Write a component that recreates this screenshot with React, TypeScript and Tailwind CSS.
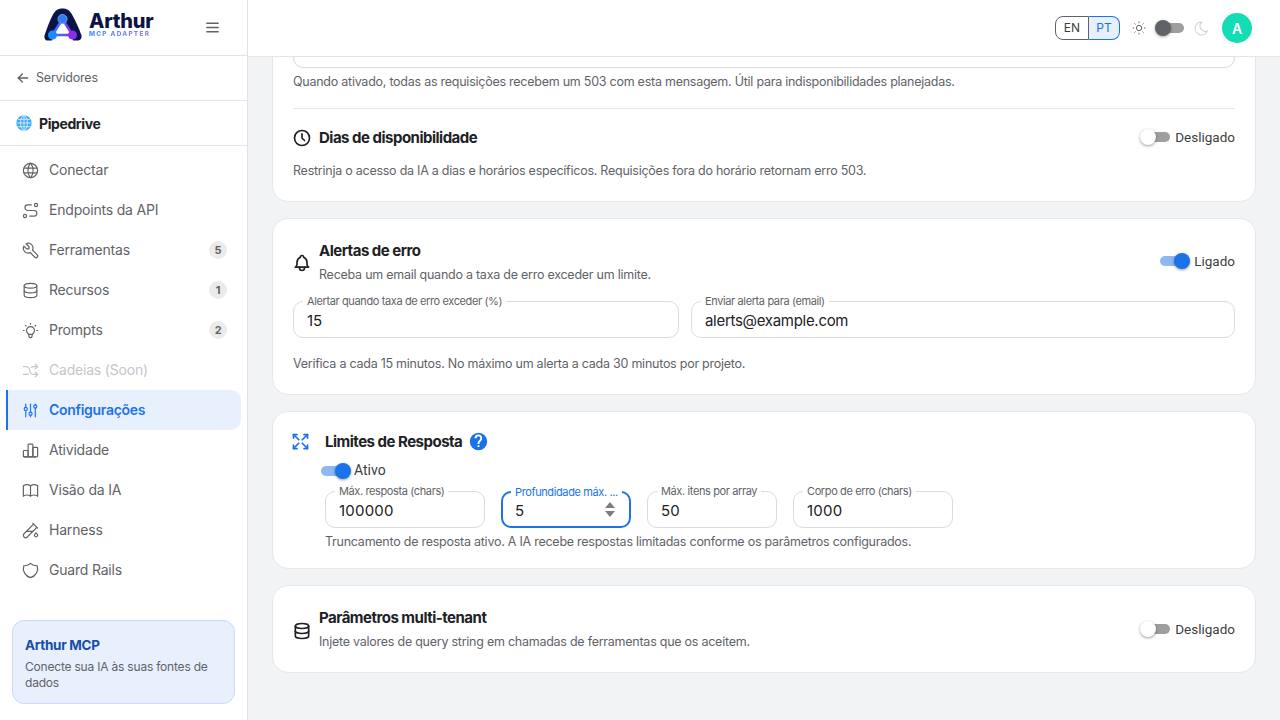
import React from "react";
import {
  TbAdjustments,
  TbArrowLeft,
  TbArrowsMaximize,
  TbArrowsShuffle,
  TbBell,
  TbBook,
  TbBulb,
  TbChartBar,
  TbClock,
  TbDatabase,
  TbMenu2,
  TbMoon,
  TbRoute,
  TbShield,
  TbSun,
  TbTestPipe,
  TbTool,
  TbWorld,
} from "react-icons/tb";

const navItems = [
  { label: "Conectar", icon: TbWorld },
  { label: "Endpoints da API", icon: TbRoute },
  { label: "Ferramentas", icon: TbTool, badge: "5" },
  { label: "Recursos", icon: TbDatabase, badge: "1" },
  { label: "Prompts", icon: TbBulb, badge: "2" },
  { label: "Cadeias (Soon)", icon: TbArrowsShuffle, disabled: true },
  { label: "Configurações", icon: TbAdjustments, active: true },
  { label: "Atividade", icon: TbChartBar },
  { label: "Visão da IA", icon: TbBook },
  { label: "Harness", icon: TbTestPipe },
  { label: "Guard Rails", icon: TbShield },
];

const Logo = () => (
  <svg width="38" height="33" viewBox="0 0 38 33" fill="none">
    <defs>
      <linearGradient id="tri" x1="6" y1="0" x2="30" y2="0" gradientUnits="userSpaceOnUse">
        <stop offset="0" stopColor="#1a8cff" />
        <stop offset="1" stopColor="#8a2cf0" />
      </linearGradient>
    </defs>
    <path
      d="M0.500 27.500C3 20 6 12 9 6.500C11.500 2 14.500 0.500 18.500 0.500C22.500 0.500 25.500 2 28 6.500C31 12 35 20 37.500 27.500C38 31 36 32.500 33.500 32.500H3.500C1.500 32.500 0 31 0.500 27.500Z"
      fill="#0c1445"
    />
    <path d="M8 33H29L28 27H9Z" fill="#ffffff" />
    <path d="M18.500 11L8.500 27H28.500Z" fill="#ffffff" stroke="url(#tri)" strokeWidth="2.500" strokeLinejoin="round" />
    <circle cx="18.500" cy="11" r="4.500" fill="#2f7bf5" stroke="#6aa5fa" strokeWidth="1" />
    <circle cx="8.500" cy="27" r="4.500" fill="#1a8cff" />
    <circle cx="28.500" cy="27" r="4.500" fill="#8a2cf0" />
  </svg>
);

const GlobeEmoji = () => (
  <svg width="16" height="16" viewBox="0 0 16 16" fill="none">
    <circle cx="8" cy="8" r="7.700" fill="#3fa9f5" />
    <g stroke="#d6effd" strokeWidth="0.900">
      <ellipse cx="8" cy="8" rx="3.400" ry="7.400" />
      <path d="M8 0.500V15.500M0.600 8H15.400M1.600 4.300H14.400M1.600 11.700H14.400" />
    </g>
  </svg>
);

const Toggle = ({ on }: { on?: boolean }) => (
  <span className="relative flex h-4 w-[30px] shrink-0 items-center">
    <span className={`h-[10px] w-[24px] rounded-full ${on ? "ml-0 bg-[#8db8f4]" : "ml-[6px] bg-[#9e9e9e]"}`} />
    <span
      className={`absolute top-0 h-4 w-4 rounded-full shadow-[0_1px_3px_rgba(0,0,0,0.4)] ${
        on ? "right-0 bg-[#1a73e8]" : "left-0 bg-white"
      }`}
    />
  </span>
);

const Field = ({
  label,
  value,
  className,
  focused,
}: {
  label: string;
  value: string;
  className: string;
  focused?: boolean;
}) => (
  <div
    className={`relative flex h-[37px] items-center rounded-[10px] bg-white text-[15px] text-[#202124] ${
      focused ? "border-2 border-[#1a73e8] pl-[12px]" : "border border-[#dadce0] pl-[13px]"
    } ${className}`}
  >
    <span
      className={`absolute -top-[8px] whitespace-nowrap bg-white px-[4px] text-[11px] leading-[14px] tracking-[-0.38px] ${
        focused ? "left-[8px] text-[#1a73e8]" : "left-[9px] text-[#5f6368]"
      }`}
    >
      {label}
    </span>
    <span className="mt-1">{value}</span>
    {focused && (
      <span className="ml-auto mr-[14px] flex flex-col gap-[3px]">
        <span className="h-0 w-0 border-x-[5px] border-b-[6px] border-x-transparent border-b-[#7a7d82]" />
        <span className="h-0 w-0 border-x-[5px] border-t-[6px] border-x-transparent border-t-[#7a7d82]" />
      </span>
    )}
  </div>
);

const Sidebar = () => (
  <aside className="flex h-full w-[248px] shrink-0 flex-col border-r border-[#e0e2e6] bg-white">
    <div className="flex h-14 shrink-0 items-center border-b border-[#e4e5e8] pb-[7px] pl-[44px]">
      <Logo />
      <div className="ml-[7px] flex flex-col">
        <span className="text-[20px] font-extrabold leading-[18px] tracking-[-0.2px] text-[#0c1445]">Arthur</span>
        <span className="mt-[1px] bg-gradient-to-r from-[#2f8ff5] to-[#9a7cf5] bg-clip-text text-[6.500px] font-extrabold leading-[6px] tracking-[1.200px] text-transparent">
          MCP ADAPTER
        </span>
      </div>
      <TbMenu2 className="ml-auto mr-[26px] mt-[7px] text-[#5f6368]" size={17} />
    </div>
    <div className="flex h-[45px] shrink-0 items-center gap-[5px] border-b border-[#e4e5e8] pl-[15px] text-[12.500px] tracking-[-0.2px] text-[#5f6368]">
      <TbArrowLeft size={16} />
      <span>Servidores</span>
    </div>
    <div className="flex h-[45px] shrink-0 items-center gap-[7px] border-b border-[#e4e5e8] pl-[16px] text-[14px] font-bold tracking-[-0.4px] text-[#202124]">
      <GlobeEmoji />
      Pipedrive
    </div>
    <nav className="mt-[4px] flex flex-col pl-[6px] pr-[6px]">
      {navItems.map((item) => {
        const Icon = item.icon;
        return (
          <div
            key={item.label}
            className={`flex h-10 items-center gap-[9px] rounded-r-[10px] text-[14px] ${
              item.active
                ? "border-l-2 border-[#1a73e8] bg-[#e8f0fe] pl-[13px] font-semibold tracking-[-0.3px] text-[#1a73e8]"
                : item.disabled
                  ? "pl-[15px] tracking-[-0.2px] text-[#c4c6ca]"
                  : "pl-[15px] tracking-[-0.2px] text-[#5f6368]"
            }`}
          >
            <Icon size={19} strokeWidth={1.5} className="shrink-0" />
            <span className="mb-[2px]">{item.label}</span>
            {item.badge && (
              <span className="ml-auto mr-[14px] flex h-[18px] w-[18px] items-center justify-center rounded-full bg-[#ebebeb] text-[11px] font-bold text-[#5f6368]">
                {item.badge}
              </span>
            )}
          </div>
        );
      })}
    </nav>
    <div className="mx-3 mb-4 mt-auto h-[84px] rounded-xl border border-[#c9dafb] bg-[#e8f0fe] px-3 pt-[15px]">
      <div className="text-[13.500px] font-bold leading-[18px] tracking-[-0.3px] text-[#174ea6]">Arthur MCP</div>
      <div className="mt-[5px] text-[12px] leading-4 tracking-[-0.2px] text-[#5f6368]">Conecte sua IA às suas fontes de dados</div>
    </div>
  </aside>
);

const Header = () => (
  <header className="z-10 flex h-[57px] shrink-0 items-center justify-end border-b border-[#e4e5e8] bg-white pr-[28px]">
    <div className="flex h-6 text-[12px]">
      <span className="flex w-[34px] items-center justify-center rounded-l-[8px] border border-[#5f6368] text-[#3c4043]">EN</span>
      <span className="flex w-[31px] items-center justify-center rounded-r-[8px] border border-l-0 border-[#1a73e8] bg-[#e8f0fe] text-[#1a73e8]">PT</span>
    </div>
    <TbSun size={16} strokeWidth={1.5} className="ml-[11px] text-[#5f6368]" />
    <span className="relative ml-[8px] flex h-5 w-[29px] items-center">
      <span className="ml-[2px] h-[10px] w-[27px] rounded-full bg-[#9e9e9e]" />
      <span className="absolute left-0 top-[2px] h-4 w-4 rounded-full bg-[#5f6368] shadow-[0_1px_3px_rgba(0,0,0,0.35)]" />
    </span>
    <TbMoon size={17} strokeWidth={1.5} className="ml-[9px] text-[#cfd1d4]" />
    <span className="ml-[12px] flex h-[30px] w-[30px] items-center justify-center rounded-full bg-[#14dcb4] text-[14px] font-semibold text-white">A</span>
  </header>
);

const Card = ({ className, children }: { className: string; children: React.ReactNode }) => (
  <section className={`rounded-2xl border border-[#e6e7ea] bg-white ${className}`}>{children}</section>
);

const hint = "text-[12.500px] leading-[16px] tracking-[-0.25px] text-[#5f6368]";
const title = "text-[15px] font-bold leading-[20px] tracking-[-0.5px]";
const stateLabel = "ml-auto flex items-center font-['Roboto',sans-serif] text-[13.500px] text-[#3c4043]";

export default function App() {
  return (
    <div className="flex h-screen w-full overflow-hidden bg-[#f1f3f5] font-['Inter',sans-serif] text-[#202124]">
      <Sidebar />
      <main className="flex min-w-0 flex-1 flex-col">
        <Header />
        <div className="flex flex-1 flex-col gap-4 overflow-hidden pl-6 pr-6">
          <Card className="-mt-[30px] shrink-0 px-5">
            <div className="h-[40px] rounded-b-[10px] border border-t-0 border-[#dadce0]" />
            <p className={`mt-[6px] ${hint}`}>
              Quando ativado, todas as requisições recebem um 503 com esta mensagem. Útil para indisponibilidades planejadas.
            </p>
            <div className="mt-[18px] flex h-[55px] items-center border-t border-[#e8e9ec] pt-[4px]">
              <TbClock size={20} className="-ml-[1px] text-[#202124]" />
              <span className={`ml-[7px] ${title}`}>Dias de disponibilidade</span>
              <span className={`${stateLabel} -mt-[2px] gap-[5px]`}>
                <Toggle />
                Desligado
              </span>
            </div>
            <p className={`pb-[22px] ${hint}`}>
              Restrinja o acesso da IA a dias e horários específicos. Requisições fora do horário retornam erro 503.
            </p>
          </Card>

          <Card className="shrink-0 px-5 pb-[22px] pt-[22px]">
            <div className="flex items-center">
              <TbBell size={20} className="-ml-[1px] mt-[1px] text-[#202124]" />
              <div className="ml-[7px]">
                <div className={title}>Alertas de erro</div>
                <div className={`mt-[6px] ${hint}`}>Receba um email quando a taxa de erro exceder um limite.</div>
              </div>
              <span className={`${stateLabel} -mt-[2px] gap-[4px]`}>
                <Toggle on />
                Ligado
              </span>
            </div>
            <div className="mt-[18px] flex gap-3">
              <Field label="Alertar quando taxa de erro exceder (%)" value="15" className="w-[386px]" />
              <Field label="Enviar alerta para (email)" value="alerts@example.com" className="flex-1 tracking-[-0.3px]" />
            </div>
            <p className={`mt-[18px] ${hint}`}>
              Verifica a cada 15 minutos. No máximo um alerta a cada 30 minutos por projeto.
            </p>
          </Card>

          <Card className="shrink-0 pb-[18px] pl-[17px] pr-5 pt-[19px]">
            <div className="flex items-center">
              <TbArrowsMaximize size={21} className="text-[#1a73e8]" />
              <span className={`ml-[14px] ${title}`}>Limites de Resposta</span>
              <svg className="ml-[7px]" width="19" height="19" viewBox="0 0 24 24" fill="#1a73e8">
                <path d="M12 1a11 11 0 1 0 0 22a11 11 0 0 0 0-22zm1.200 18h-2.400v-2.400h2.400V19zm2.500-8.200l-1.100 1.100c-.9.900-1.400 1.600-1.400 3.100h-2.400v-.6c0-1.300.5-2.500 1.400-3.400l1.500-1.500c.4-.4.700-1 .7-1.600a2.400 2.400 0 0 0-4.800 0H7a4.800 4.800 0 0 1 9.600 0c0 1.100-.4 2-.9 2.900z" />
              </svg>
            </div>
            <div className="ml-[31px] mt-[8px] flex items-center gap-[3px] font-['Roboto',sans-serif] text-[14px] text-[#3c4043]">
              <Toggle on />
              Ativo
            </div>
            <div className="ml-[35px] mt-[10px] flex gap-4">
              <Field label="Máx. resposta (chars)" value="100000" className="w-[160px] tracking-[0.2px]" />
              <Field label="Profundidade máx. ..." value="5" className="w-[130px]" focused />
              <Field label="Máx. itens por array" value="50" className="w-[130px] tracking-[0.2px]" />
              <Field label="Corpo de erro (chars)" value="1000" className="w-[160px] tracking-[0.2px]" />
            </div>
            <p className={`ml-[35px] mt-[6px] ${hint}`}>
              Truncamento de resposta ativo. A IA recebe respostas limitadas conforme os parâmetros configurados.
            </p>
          </Card>

          <Card className="flex h-[88px] shrink-0 items-center px-5">
            <TbDatabase size={20} className="-ml-[1px] mt-[3px] text-[#202124]" />
            <div className="ml-[7px]">
              <div className={title}>Parâmetros multi-tenant</div>
              <div className={`mt-[6px] ${hint}`}>
                Injete valores de query string em chamadas de ferramentas que os aceitem.
              </div>
            </div>
            <span className={`${stateLabel} gap-[5px]`}>
              <Toggle />
              Desligado
            </span>
          </Card>
        </div>
      </main>
    </div>
  );
}
